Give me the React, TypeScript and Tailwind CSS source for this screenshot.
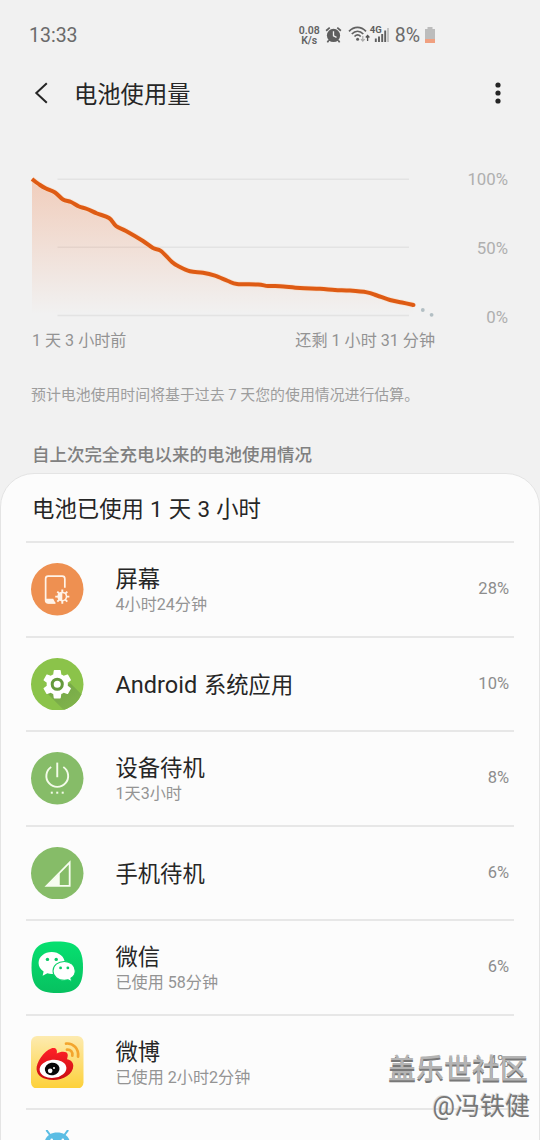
import type { ReactNode } from "react";

type UsageItem = {
    id: string;
    name: ReactNode;
    detail?: string;
    percent?: string;
    icon: ReactNode;
};

const levels: [number, number][] = [
    [32, 179], [40, 185], [46, 188.5], [55, 192.5], [63, 199.5], [71, 202], [79, 206.5], [87, 209],
    [97, 213.5], [109, 218], [116, 226], [126, 231], [143, 241], [153, 248], [161, 251], [172, 262],
    [178, 266], [190, 271.3], [203, 272.7], [215, 275.7], [228, 281], [237, 284], [258, 284.5],
    [268, 286], [280, 286.2], [300, 288], [320, 288.7], [335, 290], [350, 290.6], [367, 292.4],
    [377, 295.5], [390, 300], [402, 302.5], [413.5, 305],
];

// Catmull-Rom spline through the battery levels
function smoothPath(points: [number, number][]) {
    let d = `M${points[0][0]} ${points[0][1]}`;
    for (let i = 0; i < points.length - 1; i++) {
        const p0 = points[Math.max(i - 1, 0)];
        const p1 = points[i];
        const p2 = points[i + 1];
        const p3 = points[Math.min(i + 2, points.length - 1)];
        d += ` C${p1[0] + (p2[0] - p0[0]) / 6} ${p1[1] + (p2[1] - p0[1]) / 6} ${p2[0] - (p3[0] - p1[0]) / 6} ${p2[1] - (p3[1] - p1[1]) / 6} ${p2[0]} ${p2[1]}`;
    }
    return d;
}

function ScreenIcon() {
    return (
        <svg viewBox="0 0 52 52" className="size-[52.5px]">
            <circle cx="26" cy="26" r="26" fill="#ee9051" />
            <path d="M33.500 24.500V15.500a2.500 2.500 0 0 0-2.500-2.500H17a2.500 2.500 0 0 0-2.500 2.500V37a2.500 2.500 0 0 0 2.500 2.500H24" fill="none" stroke="#fff3e8" strokeWidth="1.700" />
            <path d="M14.500 35.500h7.500l2.500 4.500H17a2.500 2.500 0 0 1-2.500-2.500z" fill="#fff3e8" />
            <path d="M31 26.300v14M24 33.300h14M26.050 28.350l9.900 9.900M35.950 28.350l-9.900 9.900" stroke="#fff3e8" strokeWidth="1.900" />
            <circle cx="31" cy="33.300" r="4.900" fill="#fff3e8" />
            <path d="M31 29.900a3.400 3.400 0 0 1 0 6.800z" fill="#ee9051" />
        </svg>
    );
}

function GearIcon() {
    return (
        <svg viewBox="0 0 52 52" className="size-[52.5px]">
            <defs>
                <clipPath id="gear-clip">
                    <circle cx="26" cy="26" r="26" />
                </clipPath>
                <linearGradient id="gear-shadow" x1="0" y1="0" x2="1" y2="1">
                    <stop offset="0.2" stopColor="#76a848" />
                    <stop offset="1" stopColor="#84b84c" />
                </linearGradient>
            </defs>
            <circle cx="26" cy="26" r="26" fill="#8bc34a" />
            <path d="M14 33L34 53H56V42L39 25z" fill="url(#gear-shadow)" clipPath="url(#gear-clip)" />
            <g transform="translate(8.500 8.500) scale(1.458)">
                <path d="M19.140 12.940c.04-.3.06-.61.06-.94 0-.32-.02-.64-.07-.94l2.030-1.580c.18-.14.23-.41.12-.61l-1.920-3.320c-.12-.22-.37-.29-.59-.22l-2.390.96c-.5-.38-1.030-.7-1.620-.94l-.36-2.540c-.04-.24-.24-.41-.48-.41h-3.840c-.24 0-.43.17-.47.41l-.36 2.540c-.59.24-1.130.57-1.620.94l-2.390-.96c-.22-.08-.47 0-.59.22L2.740 8.870c-.12.21-.08.47.12.61l2.030 1.580c-.05.3-.09.63-.09.94s.02.64.07.94l-2.030 1.580c-.18.14-.23.41-.12.61l1.920 3.320c.12.22.37.29.59.22l2.390-.96c.5.38 1.030.7 1.620.94l.36 2.540c.05.24.24.41.48.41h3.840c.24 0 .44-.17.47-.41l.36-2.540c.59-.24 1.130-.56 1.620-.94l2.390.96c.22.08.47 0 .59-.22l1.920-3.320c.12-.22.07-.47-.12-.61z" fill="#fff" />
            </g>
            <circle cx="26" cy="26" r="5" fill="#fff" stroke="#659a3c" strokeWidth="3" />
        </svg>
    );
}

function PowerIcon() {
    return (
        <svg viewBox="0 0 52 52" className="size-[52.5px]">
            <circle cx="26" cy="26" r="26" fill="#86bc68" />
            <g fill="none" stroke="#f3fbe9" strokeWidth="1.900">
                <path d="M26 10.500v14.500" />
                <path d="M20 14.800a10.800 10.800 0 1 0 12 0" />
            </g>
            <g fill="#f3fbe9">
                <rect x="19.600" y="39.300" width="2" height="2" />
                <rect x="25" y="39.300" width="2" height="2" />
                <rect x="30.400" y="39.300" width="2" height="2" />
            </g>
        </svg>
    );
}

function SignalIcon() {
    return (
        <svg viewBox="0 0 52 52" className="size-[52.5px]">
            <circle cx="26" cy="26" r="26" fill="#86bc68" />
            <path d="M15.500 38.500L38.300 15.300v23.200z" fill="none" stroke="#f7fdf0" strokeWidth="1.800" />
            <path d="M16 38.500L28.500 26v12.500z" fill="#f7fdf0" />
        </svg>
    );
}

function WechatIcon() {
    return (
        <svg viewBox="0 0 52 52" className="size-[52.5px]">
            <defs>
                <linearGradient id="wechat-bg" x1="0" y1="0" x2="0" y2="1">
                    <stop offset="0" stopColor="#06e070" />
                    <stop offset="1" stopColor="#07c160" />
                </linearGradient>
            </defs>
            <path d="M26 .5C45 .5 51.500 7 51.500 26S45 51.500 26 51.500 .5 45 .5 26 7 .5 26 .5z" fill="url(#wechat-bg)" />
            <path d="M20.500 11C13.300 11 7.500 15.700 7.500 21.800c0 3.400 1.800 6.400 5 8.500l-1 4 4.700-2.300c1.500.4 2.900.6 4.300.6 7.500 0 13-4.900 13-10.800S27.700 11 20.500 11z" fill="#fff" />
            <path d="M33 20.300c-6.300 0-11.200 4.100-11.200 9.300s4.900 9.300 11.200 9.300c1.300 0 2.500-.2 3.700-.5l3.700 2-.9-3.500c2.800-1.800 4.300-4.500 4.300-7.300 0-5.200-4.600-9.300-10.800-9.300z" fill="#fff" stroke="#07cf68" strokeWidth="1" />
            <g fill="#07cb66">
                <circle cx="16.300" cy="18.200" r="1.700" />
                <circle cx="25" cy="18.200" r="1.700" />
                <circle cx="29.300" cy="26.700" r="1.400" />
                <circle cx="36.500" cy="26.700" r="1.400" />
            </g>
        </svg>
    );
}

function WeiboIcon() {
    return (
        <svg viewBox="0 0 52 52" className="size-[52.5px]">
            <defs>
                <linearGradient id="weibo-bg" x1="0" y1="0" x2="0" y2="1">
                    <stop offset="0" stopColor="#fdebb0" />
                    <stop offset="1" stopColor="#fdd13a" />
                </linearGradient>
                <linearGradient id="weibo-face" x1="0" y1="0" x2="0" y2="1">
                    <stop offset="0" stopColor="#ff2028" />
                    <stop offset="1" stopColor="#c90d12" />
                </linearGradient>
            </defs>
            <rect width="52" height="52" rx="6" fill="url(#weibo-bg)" />
            <path d="M5.500 33C5 26 13 14.500 20 12.300c4-1.200 6.500.8 5.500 5 4.500-2.300 10-2.300 10.800.8.4 1.600-.3 3.400-.6 5 3.300.6 6.200 2.800 6.200 6.400C41.900 38 32 43.500 22 43.500S6 39.500 5.500 33z" fill="url(#weibo-face)" />
            <ellipse cx="21.800" cy="32.500" rx="13.300" ry="9" transform="rotate(-6 21.800 32.500)" fill="#fff" />
            <ellipse cx="21" cy="32.700" rx="7.300" ry="6.200" transform="rotate(-10 21 32.700)" fill="#080808" />
            <circle cx="19" cy="34.500" r="2.300" fill="#fff" />
            <circle cx="22.800" cy="31.700" r="1" fill="#fff" />
            <g fill="none" stroke="#f3a52d" strokeWidth="2.700" strokeLinecap="round">
                <path d="M34.700 7.500C42 6.800 47.500 12.800 46.600 20.500" />
                <path d="M35.600 13.500c3.600-.2 6 2.300 5.300 6" />
            </g>
        </svg>
    );
}

function AndroidIcon() {
    return (
        <svg viewBox="0 0 52 52" className="size-[52.5px]">
            <path d="M15.700 .7l4.500 6M36.300 .7l-4.500 6" stroke="#5bbde4" strokeWidth="2" strokeLinecap="round" />
            <path d="M13 15.500C13 7 18.500 2.500 26 2.500s13 4.500 13 13z" fill="#5bbde4" />
            <circle cx="20.500" cy="9.700" r="1.300" fill="#fff" />
            <circle cx="31.500" cy="9.700" r="1.300" fill="#fff" />
        </svg>
    );
}

const items: UsageItem[] = [
    { id: "screen", name: "屏幕", detail: "4小时24分钟", percent: "28%", icon: <ScreenIcon /> },
    {
        id: "system",
        name: (
            <>
                <span className="text-[23.500px] [word-spacing:1px]">Android </span>系统应用
            </>
        ),
        percent: "10%",
        icon: <GearIcon />,
    },
    { id: "idle", name: "设备待机", detail: "1天3小时", percent: "8%", icon: <PowerIcon /> },
    { id: "cell", name: "手机待机", percent: "6%", icon: <SignalIcon /> },
    { id: "wechat", name: "微信", detail: "已使用 58分钟", percent: "6%", icon: <WechatIcon /> },
    { id: "weibo", name: "微博", detail: "已使用 2小时2分钟", percent: "4%", icon: <WeiboIcon /> },
    { id: "android", name: "", icon: <AndroidIcon /> },
];

function StatusBar() {
    return (
        <div className="flex h-[70px] shrink-0 items-center pl-[29px] pr-[104px] pt-px text-[#6a6a6a]">
            <span className="flex-1 pt-px text-[19.500px] leading-6">13:33</span>
            <div className="flex items-center">
                <div className="mr-[4px] w-[23px] text-center text-[10.500px] font-semibold leading-[10px] text-[#626262]">
                    <div>0.08</div>
                    <div>K/s</div>
                </div>
                <svg viewBox="0 0 18 18" className="mr-[6px] mt-[-2px] h-[18px] w-[17px]">
                    <circle cx="9" cy="9.500" r="7" fill="#5e5e5e" />
                    <path d="M1.200 4.500L5 1.200M16.800 4.500L13 1.200M4 14.500l-1.500 2.300M14 14.500l1.500 2.300" stroke="#5e5e5e" strokeWidth="1.800" />
                    <path d="M9 5v5l3.200 1.500" fill="none" stroke="#f1f1f1" strokeWidth="1.400" />
                </svg>
                <svg viewBox="0 0 22 18" className="mt-[-3px] h-[18px] w-[22px]">
                    <g fill="none" stroke="#626262" strokeWidth="1.700">
                        <path d="M1 6.300C6 1 13 1 18 6.300" />
                        <path d="M3.800 9c3.500-3.700 8-3.700 11.500 0" />
                        <path d="M6.500 11.500c2-2 4.200-2 6.200 0" />
                    </g>
                    <circle cx="9.600" cy="14.300" r="1.500" fill="#626262" />
                    <path d="M14.800 11v5M13 14.200l1.800 2 1.800-2" stroke="#aaa" strokeWidth="1.200" fill="none" />
                    <path d="M19.600 16v-5M17.800 12.500l1.800-2 1.800 2" stroke="#555" strokeWidth="1.300" fill="none" />
                </svg>
                <div className="relative ml-px mr-[6px] mt-[-3px]">
                    <svg viewBox="0 0 18 18" className="h-[18px] w-[18px]">
                        <path d="M4.800 13.500V17M8 11.500V17M11.200 9V17M14.200 5.500V17" stroke="#5e5e5e" strokeWidth="1.900" />
                        <path d="M17 3v14" stroke="#bbb" strokeWidth="1.700" />
                    </svg>
                    <span className="absolute left-[-1px] top-0 text-[9.500px] font-bold leading-[9px] text-[#5e5e5e]">4G</span>
                </div>
                <span className="mr-[4px] pt-px text-[19.500px] leading-6">8%</span>
                <svg viewBox="0 0 12 18" className="mt-[-2px] h-[18px] w-[12px]">
                    <path d="M3.500 1h5v2h2.500v10H1V3h2.500z" fill="#bcbcbc" />
                    <path d="M1 13h10v4H1z" fill="#f0a080" />
                </svg>
            </div>
        </div>
    );
}

function Header() {
    return (
        <header className="flex h-[46px] shrink-0 items-center pl-[34px] pr-[39px] text-[#262626]">
            <svg viewBox="0 0 14 22" className="h-[22px] w-[14px]">
                <path d="M12.800 1.200L2.300 11l10.500 9.800" fill="none" stroke="#252525" strokeWidth="2" />
            </svg>
            <h1 className="ml-[26px] flex-1 pt-[3px] text-[23.300px] leading-8">电池使用量</h1>
            <svg viewBox="0 0 6 22" className="h-[22px] w-[6px]" fill="#252525">
                <circle cx="3" cy="3" r="2.600" />
                <circle cx="3" cy="11" r="2.600" />
                <circle cx="3" cy="19" r="2.600" />
            </svg>
        </header>
    );
}

function BatteryChart() {
    const line = smoothPath(levels);

    return (
        <section className="mt-[44px] shrink-0">
            <div className="flex h-[168px] justify-between pr-[32px]">
                <svg viewBox="0 160 445 168" className="h-[168px] w-[445px]">
                    <defs>
                        <linearGradient id="level-fill" gradientUnits="userSpaceOnUse" x1="0" y1="179" x2="0" y2="314">
                            <stop offset="0" stopColor="#ef6c2c" stopOpacity="0.27" />
                            <stop offset="1" stopColor="#ef6c2c" stopOpacity="0" />
                        </linearGradient>
                    </defs>
                    <path d="M57.500 179.300H409M57.500 247.300H409M57.500 315.500H409" stroke="#e3e3e3" strokeWidth="1.400" />
                    <path d={`${line} V315 H32 Z`} fill="url(#level-fill)" />
                    <path d={line} fill="none" stroke="#fbd9bd" strokeWidth="5.500" opacity="0.6" />
                    <path d={line} fill="none" stroke="#de5b14" strokeWidth="4" />
                    <circle cx="413.500" cy="305" r="2" fill="#de5b14" />
                    <circle cx="422.800" cy="310" r="1.900" fill="#b3bfc4" />
                    <circle cx="431.600" cy="314.800" r="1.900" fill="#b3bfc4" />
                </svg>
                <div className="flex flex-col justify-between pt-[8px] text-right text-[16.800px] leading-[22px] text-[#afafaf]">
                    <span>100%</span>
                    <span>50%</span>
                    <span>0%</span>
                </div>
            </div>
            <div className="flex justify-between pl-[32px] pr-[105px] pt-px text-[16.100px] leading-6 text-[#939393]">
                <span>1 天 3 小时前</span>
                <span>还剩 1 小时 31 分钟</span>
            </div>
        </section>
    );
}

function UsageRow({ item }: { item: UsageItem }) {
    return (
        <li className="flex h-[94.500px] items-center border-t-2 border-[#e7e7e7] pl-[5px] pr-[5px]">
            {item.icon}
            <div className="ml-[32px] flex-1 pt-[2px]">
                <div className="text-[22.300px] leading-[30px] text-[#262626]">{item.name}</div>
                {item.detail && <div className="text-[16.100px] leading-[22px] text-[#949494]">{item.detail}</div>}
            </div>
            <span className="pt-px text-[16.500px] text-[#8d8d8d]">{item.percent}</span>
        </li>
    );
}

export default function App() {
    return (
        <main
            lang="zh-CN"
            className="relative flex h-[1140px] w-[540px] flex-col overflow-hidden bg-[#f1f1f1] font-['Roboto','Noto_Sans_CJK_SC',sans-serif]"
        >
            <StatusBar />
            <Header />
            <BatteryChart />
            <p className="mt-[30px] shrink-0 pl-[31px] text-[14.900px] leading-6 text-[#9d9d9d]">
                预计电池使用时间将基于过去 7 天您的使用情况进行估算。
            </p>
            <h2 className="mt-[36px] shrink-0 pl-[32px] text-[17.500px] font-medium leading-6 text-[#808080]">
                自上次完全充电以来的电池使用情况
            </h2>
            <section className="mt-[6px] h-[760px] shrink-0 rounded-t-[34px] border border-[#e4e4e4] bg-[#fcfcfc] px-[25px]">
                <div className="flex h-[67px] items-center pl-[6px] pt-[2px] text-[22.400px] leading-8 text-[#262626] [word-spacing:0.6px]">
                    电池已使用 1 天 3 小时
                </div>
                <ul>
                    {items.map((item) => (
                        <UsageRow key={item.id} item={item} />
                    ))}
                </ul>
            </section>
            <div className="absolute right-[10px] top-[1052px] text-right">
                <div className="mr-[2px] text-[28px] font-medium leading-[36px] text-[#b4b4b4] [text-shadow:0_1.500px_0_#787878]">
                    盖乐世社区
                </div>
                <div className="text-[25px] leading-[37px] text-[#777] [text-shadow:-1px_-1px_0_#dcdcdc]">@冯铁健</div>
            </div>
        </main>
    );
}
